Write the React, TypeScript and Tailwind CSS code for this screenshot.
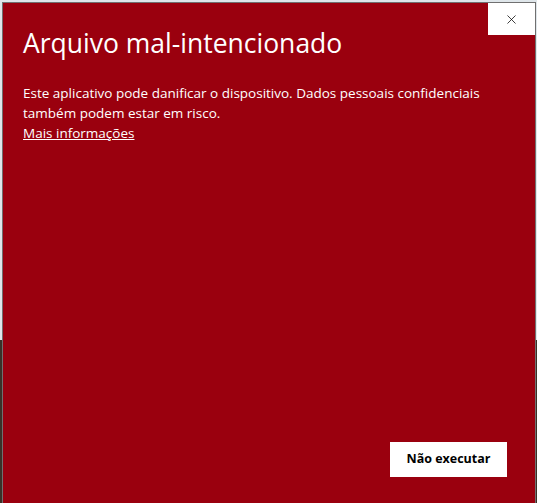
import { X } from "lucide-react";

export default function App() {
  return (
    <div className="relative h-[503px] w-[537px] overflow-hidden bg-[linear-gradient(to_bottom,#dfe6ea_0px,#dfe6ea_340px,#3b3127_340px)] font-['Open_Sans',sans-serif]">
      <div className="ml-[2px] mt-[2px] flex h-[501px] w-[534px] flex-col border-x border-t border-[#707070] bg-[#9a000e]">
        <div className="flex justify-end">
          <button className="flex h-[32px] w-[47px] items-center justify-center bg-white text-black">
            <X size={15} strokeWidth={1.2} />
          </button>
        </div>
        <div className="flex flex-1 flex-col px-[20px]">
          <h1 className="-mt-[8px] text-[26.5px] font-normal leading-[32px] text-white">
            Arquivo mal-intencionado
          </h1>
          <p className="mt-[24px] text-[13.5px] leading-[20px] text-white">
            Este aplicativo pode danificar o dispositivo. Dados pessoais confidenciais
            <br />
            também podem estar em risco.
          </p>
          <a className="text-[13.5px] leading-[20px] text-white underline" href="#">
            Mais informações
          </a>
          <div className="mt-auto mb-[26px] flex justify-end pr-[8px]">
            <button className="h-[35px] w-[117px] bg-white text-[12.5px] font-bold text-black">
              Não executar
            </button>
          </div>
        </div>
      </div>
    </div>
  );
}
